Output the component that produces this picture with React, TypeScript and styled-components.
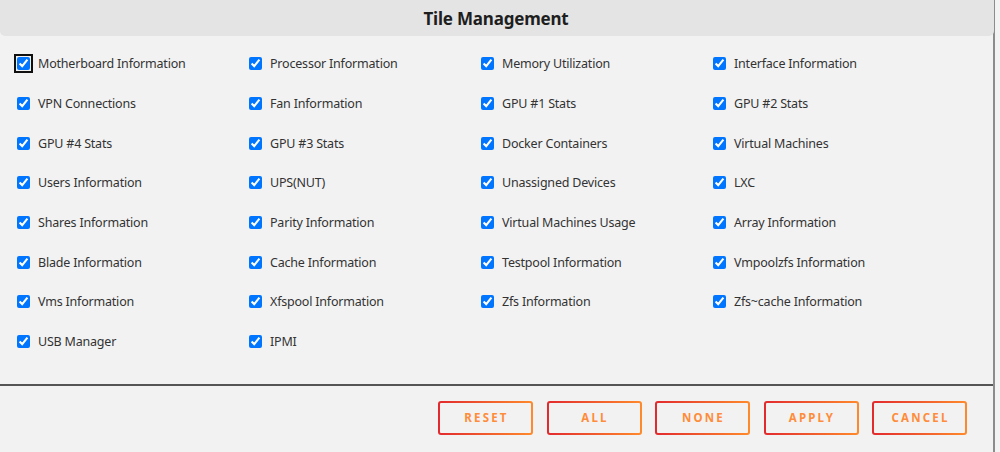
import styled, { createGlobalStyle } from 'styled-components';

const GlobalStyle = createGlobalStyle`
  html, body {
    margin: 0;
    padding: 0;
    background: #f3f3f3;
  }
  body {
    font-family: 'Noto Sans', 'Open Sans', sans-serif;
  }
`;

const tiles: string[] = [
  'Motherboard Information',
  'Processor Information',
  'Memory Utilization',
  'Interface Information',
  'VPN Connections',
  'Fan Information',
  'GPU #1 Stats',
  'GPU #2 Stats',
  'GPU #4 Stats',
  'GPU #3 Stats',
  'Docker Containers',
  'Virtual Machines',
  'Users Information',
  'UPS(NUT)',
  'Unassigned Devices',
  'LXC',
  'Shares Information',
  'Parity Information',
  'Virtual Machines Usage',
  'Array Information',
  'Blade Information',
  'Cache Information',
  'Testpool Information',
  'Vmpoolzfs Information',
  'Vms Information',
  'Xfspool Information',
  'Zfs Information',
  'Zfs~cache Information',
  'USB Manager',
  'IPMI',
];

const buttons = ['Reset', 'All', 'None', 'Apply', 'Cancel'];

// Dialog shell.
const Dialog = styled.div`
  width: 995px;
  height: 452px;
  background: #f2f2f2;
  border-right: 2px solid #8c8c8c;
  display: flex;
  flex-direction: column;
  box-sizing: border-box;
`;

const Header = styled.div`
  width: 994px;
  height: 36px;
  flex: none;
  background: #e4e4e4;
  border-radius: 0 0 5px 5px;
  display: flex;
  align-items: center;
  justify-content: center;
`;

const Title = styled.h2`
  margin: 0 0 0 -2px;
  font-size: 17px;
  font-weight: 700;
  letter-spacing: -0.2px;
  color: #1e1e1e;
`;

// Tile list.
const TileGrid = styled.div`
  display: grid;
  grid-template-columns: repeat(4, 232px);
  grid-auto-rows: 39.7px;
  padding: 8px 0 22px 17px;
`;

const TileLabel = styled.label`
  display: flex;
  align-items: center;
  gap: 8px;
  font-size: 12.5px;
  letter-spacing: -0.2px;
  color: #333;
  cursor: pointer;
`;

const Check = styled.input<{ $focused?: boolean }>`
  width: 13px;
  height: 13px;
  margin: 0;
  accent-color: #0075ff;
  ${(props) =>
    props.$focused &&
    `
    outline: 2px solid #101010;
    outline-offset: 1px;
    border-radius: 2px;
  `}
`;

const Divider = styled.hr`
  width: 993px;
  margin: 0;
  border: none;
  border-top: 2px solid #555;
`;

// Footer buttons.
const Footer = styled.div`
  display: flex;
  justify-content: flex-end;
  gap: 13.5px;
  padding: 15px 26px 0 0;
`;

const GradientButton = styled.button`
  width: 95px;
  height: 34px;
  border: 2px solid transparent;
  border-radius: 3px;
  background:
    linear-gradient(#f2f2f2, #f2f2f2) padding-box,
    linear-gradient(90deg, #e22a2e, #ff8a2c) border-box;
  color: #ff8c3a;
  font-family: 'Noto Sans', 'Open Sans', sans-serif;
  font-size: 11.5px;
  font-weight: 700;
  letter-spacing: 2.2px;
  text-transform: uppercase;
  padding: 0 0 0 2px;
  cursor: pointer;
`;

export default function App() {
  return (
    <>
      <GlobalStyle />
      <Dialog>
        <Header>
          <Title>Tile Management</Title>
        </Header>
        <TileGrid>
          {tiles.map((name, i) => (
            <TileLabel key={name}>
              <Check type="checkbox" defaultChecked $focused={i === 0} />
              {name}
            </TileLabel>
          ))}
        </TileGrid>
        <Divider />
        <Footer>
          {buttons.map((b) => (
            <GradientButton key={b}>{b}</GradientButton>
          ))}
        </Footer>
      </Dialog>
    </>
  );
}
